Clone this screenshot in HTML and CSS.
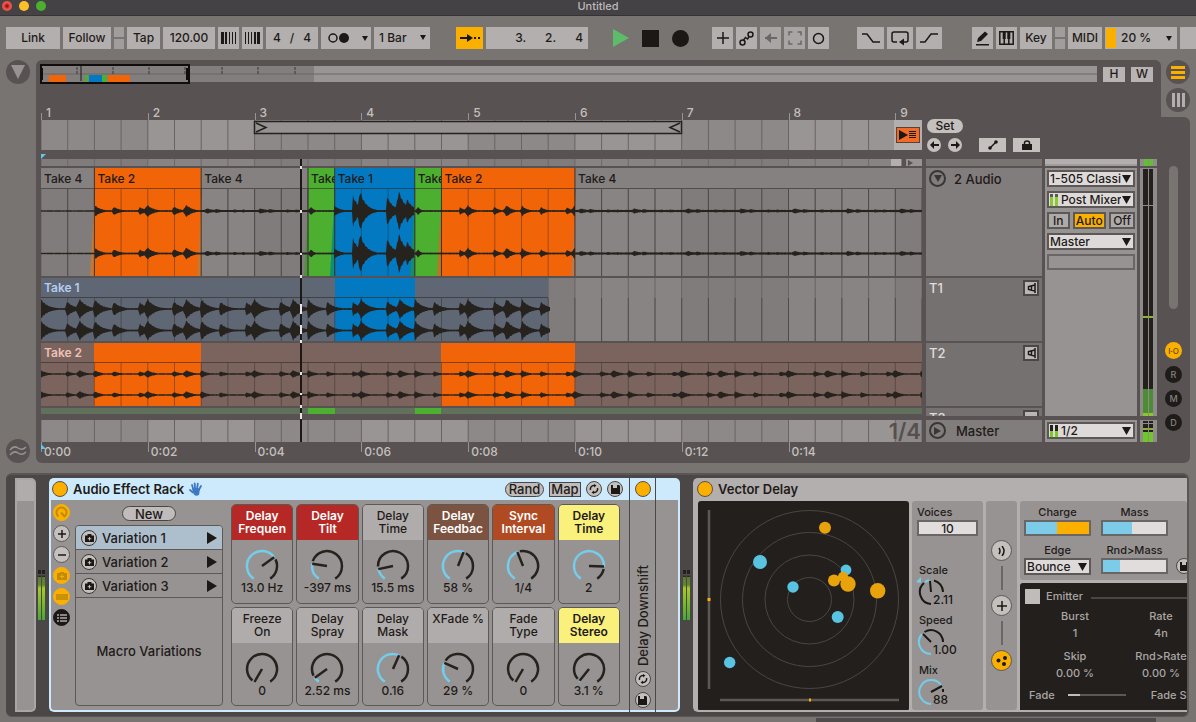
FILE: index.html
```html
<!DOCTYPE html>
<html lang="en">
<head>
<meta charset="utf-8">
<title>Untitled</title>
<link rel="stylesheet" href="styles.css">
</head>
<body>
<header class="titlebar">
  <div class="lights"><i class="red-light"></i><i class="yellow-light"></i><i class="green-light"></i></div>
  <h1>Untitled</h1>
</header>

<nav class="toolbar" aria-label="Control bar">
  <div class="group">
    <button class="tb w54">Link</button>
    <button class="tb w48">Follow</button>
    <button class="tb split" aria-label="Nudge"></button>
    <button class="tb w33">Tap</button>
    <button class="tb w52">120.00</button>
    <button class="tb w21" aria-label="Nudge down"><svg width="15" height="12"><path d="M0 0h3v12H0zM4 0h2v12H4zM8 0h1v12H8zM11 0h1v12h-1zM14 0h1v12h-1z"/></svg></button>
    <button class="tb w21" aria-label="Nudge up"><svg width="15" height="12"><path d="M0 0h1v12H0zM3 0h1v12H3zM6 0h1v12H6zM9 0h2v12H9zM12 0h3v12h-3z"/></svg></button>
    <button class="tb w52 sig"><span>4</span><span>/</span><span>4</span></button>
    <button class="tb w50 drop" aria-label="Metronome"><svg width="22" height="10"><circle cx="5" cy="5" r="4" fill="none" stroke="#1b1815" stroke-width="1.5"/><circle cx="16" cy="5" r="5"/></svg><svg width="6" height="5"><path d="M0 0h6L3 5z"/></svg></button>
    <span class="tbselect w56"><select aria-label="Quantization"><option>1 Bar</option></select><svg width="6" height="5"><path d="M0 0h6L3 5z"/></svg></span>
  </div>
  <div class="group g26">
    <button class="tb w27 on" aria-label="Follow playback"><svg width="20" height="10"><path d="M0 4h7V1l6 4-6 4V6H0zM14 4h2v2h-2zM18 4h2v2h-2z"/></svg></button>
    <output class="tb position"><span>3.</span><span>2.</span><span>4</span></output>
  </div>
  <div class="group transport">
    <button aria-label="Play"><svg width="16" height="18"><path d="M0 0l16 9L0 18z" fill="#5dbb6a"/></svg></button>
    <button aria-label="Stop"><svg width="17" height="17"><path d="M0 0h17v17H0z"/></svg></button>
    <button aria-label="Record"><svg width="17" height="17"><circle cx="8.500" cy="8.500" r="8.500"/></svg></button>
  </div>
  <div class="group g23">
    <button class="tb w21" aria-label="Overdub"><svg class="line" width="14" height="14"><path d="M7 1v12M1 7h12"/></svg></button>
    <button class="tb w21" aria-label="Automation arm"><svg class="line" width="15" height="15"><circle cx="3.500" cy="11.500" r="2.500"/><circle cx="11.500" cy="3.500" r="2.500"/><path d="M4.500 9l2-2.500 2 1.500L10 6"/></svg></button>
    <button class="tb w21 dim" aria-label="Re-enable automation"><svg width="12" height="10"><path d="M0 4h6V1l0-1v10l0-4H0z" fill="#6b6766"/><path d="M0 5l6-5v4h6v2H6v4z" fill="#6b6766"/></svg></button>
    <button class="tb w21 dim" aria-label="Capture"><svg class="line" width="14" height="14"><path stroke="#6b6766" d="M1 4.500V1h3.500M9.500 1H13v3.500M13 9.500V13H9.500M4.500 13H1V9.500" /></svg></button>
    <button class="tb w21" aria-label="Session record"><svg class="line" width="13" height="13"><circle cx="6.500" cy="6.500" r="5"/></svg></button>
  </div>
  <div class="group g28">
    <button class="tb w27" aria-label="Punch in"><svg class="line" width="18" height="12"><path d="M0 2h5l6 8h7"/></svg></button>
    <button class="tb w26" aria-label="Loop"><svg class="line" width="18" height="15"><path d="M6 11H3Q1 11 1 9V3q0-2 2-2h12q2 0 2 2v6q0 2-2 2h-4"/><path d="M13 7.500v7L8 11z" fill="#1b1815" stroke="none"/></svg></button>
    <button class="tb w26" aria-label="Punch out"><svg class="line" width="18" height="12"><path d="M0 10h5l6-8h7"/></svg></button>
  </div>
  <div class="group last">
    <button class="tb w21" aria-label="Draw mode"><svg width="15" height="15"><path d="M1 13h13v1.500H1zM2 11l1-4 7-6.500L13 3 6 10z"/></svg></button>
    <button class="tb w21" aria-label="Computer keyboard"><svg class="line" width="15" height="14"><path d="M.8.800h13.400v12.400H.8zM5.200 7v6M9.800 7v6"/><path stroke-width="3" d="M5.200 1v7M9.800 1v7"/></svg></button>
    <button class="tb w32">Key</button>
    <button class="tb split" aria-label="Key activity"></button>
    <button class="tb w34">MIDI</button>
    <button class="tb cpu"><i></i><span>20 %</span><svg width="6" height="5"><path d="M0 0h6L3 5z"/></svg></button>
    <button class="tb w16" aria-label="Disk overload"></button>
  </div>
</nav>

<main class="arrangement">
  <aside class="gutter">
    <button class="round24" aria-label="Show browser"><svg width="14" height="14"><path d="M0 0h14L7 14z" fill="#979392"/></svg></button>
    <button class="round24" aria-label="Groove pool"><svg class="line" width="18" height="12"><path stroke="#979392" d="M1 5q4-5 8-2t8-1M1 10q4-5 8-2t8-1"/></svg></button>
  </aside>

  <section class="panel">
    <div class="overview-row">
      <svg class="overview" viewBox="0 0 1057 20" preserveAspectRatio="none">
        <rect y="2" width="1057" height="16" fill="#999594"/>
        <rect y="2" width="274" height="16" fill="#827e7d"/>
        <path d="M0 10h1057" stroke="#6a6665"/>
        <path d="M37 3v8M73 3v8M109 3v8M145 3v8M182 3v8M218 3v8M255 3v8" stroke="#3a3634" stroke-dasharray="3 1"/>
        <rect x="9" y="11" width="17" height="7" fill="#f26408"/><rect x="45" y="11" width="3" height="7" fill="#4caf30"/><rect x="49" y="11" width="13" height="7" fill="#0379c2"/><rect x="62" y="11" width="5" height="7" fill="#4caf30"/><rect x="68" y="11" width="22" height="7" fill="#f26408"/>
        <path d="M41 2v15" stroke="#1b1815"/>
        <rect x="1" y="1" width="148" height="18" fill="none" stroke="#100e0c" stroke-width="2"/>
        <path d="M2 4v12M147 4v12" stroke="#100e0c" stroke-width="2"/>
      </svg>
      <button class="hw">H</button><button class="hw">W</button>
    </div>

    <div class="body">
      <div class="timeline">
        <div class="ruler"><span>1</span><span>2</span><span>3</span><span>4</span><span>5</span><span>6</span><span>7</span><span>8</span><span>9</span></div>
        <div class="scrub">
          <svg class="grid" data-grid="scrub"></svg>
          <svg class="grid" viewBox="0 0 881 30" preserveAspectRatio="none"><path d="M213.500 1.500h427v12h-427z" fill="#969291" stroke="#24201e" stroke-width="1.500"/><path d="M215 3l10 4.500L215 12M639 3l-10 4.500L639 12" fill="none" stroke="#24201e" stroke-width="1.500"/></svg>
          <div class="back"><button aria-label="Back to arrangement"><svg width="18" height="10"><path d="M0 0l9 5-9 5zM10 1h7v1h-7zM10 3h7v1h-7zM10 5h7v1h-7zM10 7h7v1h-7z"/></svg></button></div>
        </div>
        <div class="marker"><svg width="6" height="6"><path d="M0 0h5L0 5z" fill="#5fc8e8"/></svg></div>
        <div class="tracks">
          <div class="strip"><svg class="grid" data-grid="lane"></svg><i></i><b></b></div>
          <div class="lane main">
            <svg class="grid" data-grid="lane"></svg>
            <div class="clips">
              <div class="clip b2"><span>Take 4</span></div><div class="clip b4 orange"><span>Take 2</span></div><div class="clip b4"><span>Take 4</span></div><div class="clip b1 green"><span>Take 4</span></div><div class="clip b3 blue"><span>Take 1</span></div><div class="clip b1 green"><span>Take 4</span></div><div class="clip b5 orange"><span>Take 2</span></div><div class="clip b13"><span>Take 4</span></div>
            </div>
            <svg class="grid" data-wave="main" data-height="108"></svg>
          </div>
          <div class="lane take">
            <svg class="grid" data-grid="lane"></svg>
            <div class="clips take1">
              <div class="clip b11"><span>Take 1</span></div><div class="clip b3 blue"><span></span></div><div class="clip b5"><span></span></div><div class="empty b14"></div>
            </div>
            <svg class="grid" data-wave="take1" data-height="63"></svg>
          </div>
          <div class="lane take">
            <div class="clips take2">
              <div class="clip b2"><span>Take 2</span></div><div class="clip b4 orange"><span></span></div><div class="clip b9"><span></span></div><div class="clip b5 orange"><span></span></div><div class="clip b13"><span></span></div>
            </div>
            <svg class="grid" data-wave="take2" data-height="63"></svg>
          </div>
          <div class="lane cut">
            <div class="clips take3">
              <div class="clip b10"><span>Take 3</span></div><div class="clip b1 green"></div><div class="clip b3"></div><div class="clip b1 green"></div><div class="clip b18"></div>
            </div>
          </div>
          <div class="scrub low"><svg class="grid" data-grid="scrub"></svg><span>1/4</span></div>
          <svg class="playhead" width="2" height="283"><path d="M1 0v283" stroke="#1b1815" stroke-width="2"/><path d="M1 7v3M1 51v3M1 94v2M1 116v3M1 145v10M1 166v9M1 181v3M1 213v3M1 234v2M1 246v3M1 254v6" stroke="#e8e4e2" stroke-width="2"/></svg>
        </div>
        <div class="times"><svg width="6" height="6"><path d="M0 0l5 5H0z" fill="#5fc8e8"/></svg><span>0:00</span><span>0:02</span><span>0:04</span><span>0:06</span><span>0:08</span><span>0:10</span><span>0:12</span><span>0:14</span></div>
      </div>

      <div class="mixer">
        <div class="locators">
          <div class="setbox"><button class="set">Set</button>
            <div><button class="loc" aria-label="Previous locator"><svg width="9" height="8"><path d="M0 4l4-4v3h5v2H4v3z"/></svg></button><button class="loc" aria-label="Next locator"><svg width="9" height="8"><path d="M9 4L5 0v3H0v2h5v3z"/></svg></button></div></div>
          <button class="mini" aria-label="Automation mode"><svg width="10" height="10"><path d="M2 8l6-6" stroke="#1b1815" stroke-width="1.500"/><circle cx="2" cy="8" r="1.800"/><circle cx="8" cy="2" r="1.800"/></svg></button>
          <button class="mini" aria-label="Lock envelopes"><svg width="10" height="10"><path d="M0 4h10v6H0z"/><path d="M2.500 5V3q0-2 2.500-2t2.500 2v2" fill="none" stroke="#1b1815" stroke-width="1.500"/></svg></button>
        </div>
        <div class="cols stub"><i></i><i class="lt"></i><i class="gm"></i></div>
        <div class="cols heads">
          <div class="names">
            <div class="head audio"><button class="fold" aria-label="Fold"><svg width="8" height="7"><path d="M0 0h8L4 7z" fill="#3a3634"/></svg></button><span>2 Audio</span></div>
            <div class="head take"><span>T1</span><button class="spk" aria-label="Audition take 1"><svg class="line" width="9" height="10"><path d="M8 0v10M8 2L1.500 3.500v3L8 8M4.500 3v4"/></svg></button></div>
            <div class="head take"><span>T2</span><button class="spk" aria-label="Audition take 2"><svg class="line" width="9" height="10"><path d="M8 0v10M8 2L1.500 3.500v3L8 8M4.500 3v4"/></svg></button></div>
            <div class="head take cut"><span>T3</span><button class="spk" aria-label="Audition take 3"></button></div>
          </div>
          <div class="io">
            <span class="sel"><select aria-label="Audio from"><option>1-505 Classic</option></select><svg width="9" height="8"><path d="M0 0h9L4.500 8z"/></svg></span>
            <span class="sel pad"><svg class="lv" width="8" height="12"><path d="M0 0h3v12H0zM5 0h3v12H5z" fill="#8cc832"/><path d="M0 0h3v3H0zM5 0h3v3H5z" fill="#5c5856"/></svg><select aria-label="Input channel"><option>Post Mixer</option></select><svg width="9" height="8"><path d="M0 0h9L4.500 8z"/></svg></span>
            <div class="mon"><button>In</button><button class="on">Auto</button><button>Off</button></div>
            <span class="sel"><select aria-label="Audio to"><option>Master</option></select><svg width="9" height="8"><path d="M0 0h9L4.500 8z"/></svg></span>
            <div class="blank"></div>
          </div>
          <div class="vu"><i></i><i></i></div>
        </div>
        <div class="cols master">
          <div class="head"><button class="fold" aria-label="Unfold"><svg width="7" height="8"><path d="M0 0l7 4-7 4z" fill="#3a3634"/></svg></button><span>Master</span></div>
          <div class="io"><span class="sel pad"><svg class="lv" width="8" height="12"><path d="M0 0h3v12H0zM5 0h3v12H5z" fill="#7cc828"/><path d="M0 0h3v6H0zM5 0h3v6H5z" fill="#24201e"/></svg><select aria-label="Master output"><option>1/2</option></select><svg width="9" height="8"><path d="M0 0h9L4.500 8z"/></svg></span></div>
          <div class="vu"><i></i><i></i></div>
        </div>
      </div>
    </div>
  </section>

  <aside class="side">
    <div class="views">
      <button class="round24" aria-label="Arrangement view"><svg width="14" height="13"><path d="M0 0h14v3H0zM0 5h14v3H0zM0 10h14v3H0z" fill="#fbb000"/></svg></button>
      <button class="round24" aria-label="Session view"><svg width="13" height="14"><path d="M0 0h3v14H0zM5 0h3v14H5zM10 0h3v14h-3z" fill="#b3afae"/></svg></button>
    </div>
    <div class="side-lower">
      <i class="scroll"></i>
      <div class="toggles"><button class="on">I·O</button><button>R</button><button>M</button><button>D</button></div>
    </div>
  </aside>
</main>

<section class="devices" aria-label="Devices">
  <div class="tail"></div>
  <div class="meter"></div>

  <article class="rack">
    <header><button class="power" aria-label="Device on"></button><h2>Audio Effect Rack</h2>
      <svg class="hand line" width="13" height="14"><path d="M4.500 8L3 3M6 7L5.700 1.500M8 7l.8-5.300M9.500 8.500L12 4M4 10.500L1 8" stroke="#3b78c4" stroke-width="1.800" stroke-linecap="round"/><path d="M4 7h6l-.5 5q-2 2-4 0z" fill="#3b78c4" stroke="#3b78c4"/></svg>
      <span class="grow"></span>
      <button class="pill">Rand</button><button class="map">Map</button>
      <button class="rnd" aria-label="Hot swap"><svg class="line" width="10" height="10"><path d="M1.500 6A3.500 3.500 0 0 1 5 1.500M8.500 4A3.500 3.500 0 0 1 5 8.500"/><path d="M5 0l2.500 1.500L5 3.500zM5 10L2.500 8.500 5 6.500z" fill="#1b1815" stroke="none"/></svg></button>
      <button class="rnd" aria-label="Save preset"><svg width="9" height="9"><path d="M0 0h8l1 1v8H0z"/><path d="M2 0h4v3H2z" fill="#c4c0be"/></svg></button>
    </header>
    <div class="rack-body">
      <div class="icons">
        <button class="ico on" aria-label="Macro controls"><svg class="line" width="13" height="13"><path d="M3.500 10.500A5 5 0 1 1 9.500 10.500L6 6.500" stroke="#c08a0c" stroke-width="2"/></svg></button>
        <button class="ico" aria-label="Add macro"><svg class="line" width="8" height="8"><path d="M4 0v8M0 4h8"/></svg></button>
        <button class="ico" aria-label="Remove macro"><svg class="line" width="8" height="8"><path d="M0 4h8"/></svg></button>
        <button class="ico on" aria-label="Variations"><svg width="10" height="8"><path d="M0 1h3V0h4v1h3v7H0z" fill="#c08a0c"/><path d="M5 2.500v4M3 4.500h4" stroke="#fbb000"/></svg></button>
        <button class="ico on" aria-label="Devices"><svg width="12" height="6"><path d="M0 0h12v6H0z" fill="#c9920c"/></svg></button>
        <button class="ico black" aria-label="Chain list"><svg width="10" height="8"><path d="M0 0h2v2H0zM3 0h7v2H3zM0 3h2v2H0zM3 3h7v2H3zM0 6h2v2H0zM3 6h7v2H3z" fill="#8a8685"/></svg></button>
      </div>
      <div class="variations">
        <button class="new">New</button>
        <div class="list">
          <button class="row sel1"><i><svg width="9" height="8"><path d="M0 1.500h2.500V0h4v1.500H9V8H0z"/><path d="M4.500 3v3.500M2.800 4.700h3.500" stroke="#c4c0be"/></svg></i><span>Variation 1</span><svg width="10" height="12"><path d="M0 0l10 6-10 6z"/></svg></button>
          <button class="row"><i><svg width="9" height="8"><path d="M0 1.500h2.500V0h4v1.500H9V8H0z"/><path d="M4.500 3v3.500M2.800 4.700h3.500" stroke="#c4c0be"/></svg></i><span>Variation 2</span><svg width="10" height="12"><path d="M0 0l10 6-10 6z"/></svg></button>
          <button class="row"><i><svg width="9" height="8"><path d="M0 1.500h2.500V0h4v1.500H9V8H0z"/><path d="M4.500 3v3.500M2.800 4.700h3.500" stroke="#c4c0be"/></svg></i><span>Variation 3</span><svg width="10" height="12"><path d="M0 0l10 6-10 6z"/></svg></button>
          <p>Macro Variations</p>
        </div>
      </div>
      <div class="macros">
        <div class="macro red"><h3>Delay<br>Frequen</h3><svg class="knob" data-angle="54"></svg><span>13.0 Hz</span></div>
        <div class="macro red"><h3>Delay<br>Tilt</h3><svg class="knob" data-angle="-81"></svg><span>-397 ms</span></div>
        <div class="macro"><h3>Delay<br>Time</h3><svg class="knob" data-angle="-102"></svg><span>15.5 ms</span></div>
        <div class="macro brown"><h3>Delay<br>Feedbac</h3><svg class="knob" data-angle="22"></svg><span>58 %</span></div>
        <div class="macro rust"><h3>Sync<br>Interval</h3><svg class="knob" data-angle="-22"></svg><span>1/4</span></div>
        <div class="macro yellow"><h3>Delay<br>Time</h3><svg class="knob" data-angle="92"></svg><span>2</span></div>
        <div class="macro"><h3>Freeze<br>On</h3><svg class="knob" data-angle="-150"></svg><span>0</span></div>
        <div class="macro"><h3>Delay<br>Spray</h3><svg class="knob" data-angle="-126"></svg><span>2.52 ms</span></div>
        <div class="macro"><h3>Delay<br>Mask</h3><svg class="knob" data-angle="24"></svg><span>0.16</span></div>
        <div class="macro"><h3>XFade %</h3><svg class="knob" data-angle="-66"></svg><span>29 %</span></div>
        <div class="macro"><h3>Fade<br>Type</h3><svg class="knob" data-angle="-150"></svg><span>0</span></div>
        <div class="macro yellow"><h3>Delay<br>Stereo</h3><svg class="knob" data-angle="-141"></svg><span>3.1 %</span></div>
      </div>
    </div>
  </article>
  <article class="chain">
    <div class="chain-head"><button class="power" aria-label="Chain on"></button></div>
    <h2>Delay Downshift</h2>
    <button class="rnd" aria-label="Hot swap"><svg class="line" width="10" height="10"><path d="M1.500 6A3.500 3.500 0 0 1 5 1.500M8.500 4A3.500 3.500 0 0 1 5 8.500"/><path d="M5 0l2.500 1.500L5 3.500zM5 10L2.500 8.500 5 6.500z" fill="#1b1815" stroke="none"/></svg></button>
    <button class="rnd" aria-label="Save preset"><svg width="9" height="9"><path d="M0 0h8l1 1v8H0z"/><path d="M2 0h4v3H2z" fill="#c4c0be"/></svg></button>
  </article>
  <div class="rack-end"></div>
  <div class="meter"></div>

  <article class="vector">
    <header><button class="power" aria-label="Device on"></button><h2>Vector Delay</h2></header>
    <div class="vector-body">
      <svg class="scope" viewBox="0 0 211 210" width="211" height="210">
        <g fill="none" stroke="#4a4644"><circle cx="111.500" cy="98.500" r="22"/><circle cx="111.500" cy="98.500" r="44.500"/><circle cx="111.500" cy="98.500" r="67"/><circle cx="111.500" cy="98.500" r="89"/><path stroke="#5c5856" stroke-width="2.500" d="M11 9v179M22 199h179"/></g>
        <path fill="#fbb000" d="M9.500 97h3v3h-3zM111 197.500h2v3h-2z"/>
        <g fill="#58c4e2"><circle cx="62" cy="61" r="7"/><circle cx="95" cy="86" r="5.700"/><circle cx="148" cy="69" r="5.400"/><circle cx="139.700" cy="116" r="6"/><circle cx="31.700" cy="161.500" r="5.700"/></g>
        <g fill="#e8a20c"><circle cx="127" cy="26.700" r="6"/><circle cx="136" cy="79.500" r="6"/><circle cx="145" cy="75.700" r="5"/><circle cx="150" cy="83" r="7.700"/><circle cx="179.700" cy="89.700" r="7.700"/></g>
      </svg>
      <div class="params">
        <label for="voices">Voices</label><input id="voices" type="text" value="10">
        <div class="dial first"><span>Scale</span><svg width="50" height="30"><path d="M15 27A12 12 0 0 1 8 6M18 3.500A12 12 0 0 1 27 15" /><path d="M15 15L14 4"/><path stroke="#74cdea" d="M9 5l4-2"/><path d="M0 5l5-5v6z" fill="#74cdea" stroke="none"/><text x="17" y="27">2.11</text></svg></div>
        <div class="dial"><span>Speed</span><svg width="50" height="30"><path stroke="#74cdea" d="M15 27A12 12 0 0 1 6 7"/><path d="M8.500 5A12 12 0 0 1 27 15M15 15L7 7"/><text x="17" y="27">1.00</text></svg></div>
        <div class="dial"><span>Mix</span><svg width="50" height="30"><path stroke="#74cdea" d="M15 27A12 12 0 1 1 25 8"/><path d="M15 15l11-6M27 12v3"/><text x="17" y="27">88</text></svg></div>
      </div>
      <div class="modes">
        <button class="big" aria-label="Delay"><svg class="line" width="8" height="10"><path d="M1 2q2 3 0 6M4 0q4 5 0 10"/></svg></button><i></i>
        <button class="big" aria-label="Add"><svg class="line" width="10" height="10"><path d="M5 0v10M0 5h10"/></svg></button><i></i>
        <button class="big on" aria-label="Particles"><svg width="12" height="12"><circle cx="2.500" cy="5.500" r="2"/><circle cx="9" cy="3" r="2"/><circle cx="8" cy="9" r="2"/></svg></button>
      </div>
      <div class="right">
        <div class="top">
          <div class="f"><label for="charge">Charge</label><input class="bar charge" id="charge" type="range" value="50"></div>
          <div class="f"><label for="mass">Mass</label><input class="bar mass" id="mass" type="range" value="46"></div>
          <div class="f"><label for="edge">Edge</label><span class="sel"><select id="edge"><option>Bounce</option></select><svg width="9" height="8"><path d="M0 0h9L4.500 8z"/></svg></span></div>
          <div class="f"><label for="rnd">Rnd&gt;Mass</label><input class="bar rndm" id="rnd" type="range" value="27"></div>
          <button class="rnd save" aria-label="Save"><svg width="9" height="9"><path d="M0 0h8l1 1v8H0z"/><path d="M2 0h4v3H2z" fill="#c4c0be"/></svg></button>
        </div>
        <div class="emitter">
          <div class="em-head"><input type="checkbox" id="emitter"><label for="emitter">Emitter</label><i></i></div>
          <dl><div><dt>Burst</dt><dd>1</dd></div><div><dt>Rate</dt><dd>4n</dd></div><div><dt>Skip</dt><dd>0.00 %</dd></div><div><dt>Rnd&gt;Rate</dt><dd>0.00 %</dd></div></dl>
          <div class="fade"><label for="fade">Fade</label><input id="fade" type="range" value="20"><span>Fade Shape</span></div>
        </div>
      </div>
    </div>
  </article>
</section>
<footer class="foot"><i></i></footer>
<script src="app.js"></script>
</body>
</html>
```
FILE: styles.css
```css
* { box-sizing: border-box; }
body { margin: 0; min-height: 100vh; background: #787472; color: #1f1b19; font: 500 12px/14px Inter, "Liberation Sans", sans-serif; display: flex; flex-direction: column; overflow-x: hidden; }
button, select, input { font: inherit; color: inherit; margin: 0; padding: 0; border: 0; border-radius: 0; background: none; }
button { display: flex; align-items: center; justify-content: center; white-space: nowrap; }
select { appearance: none; outline: 0; }
h1, h2, h3, p, dl, dt, dd { margin: 0; font: inherit; }
svg { display: block; flex: none; fill: #1b1815; }
svg.line { fill: none; stroke: #1b1815; stroke-width: 1.5; }

.titlebar { height: 16px; background: #454245; border-bottom: 1px solid #373335; display: grid; grid-template-columns: 1fr auto 1fr; }
.titlebar h1 { font-size: 11px; line-height: 13px; font-weight: 500; color: #bdb9ba; }
.lights { display: flex; gap: 7px; padding: 1px 2px; }
.lights i { width: 10px; height: 10px; border-radius: 50%; }
.red-light { background: radial-gradient(#901818 1px, #ee5048 3px); }
.yellow-light { background: #fcbf2c; }
.green-light { background: #4caf30; }

.toolbar { display: flex; align-items: center; height: 44px; padding-left: 6px; }
.group { display: flex; gap: 3px; align-items: center; flex: none; }
.g28 { margin-left: 28px; } .g26 { margin-left: 26px; } .g23 { margin-left: 23px; }
.last { margin-left: auto; }
.tb { height: 22px; background: #b3afae; font-size: 12px; flex: none; }
.tb.on { background: #fbb000; }
.tb.dim { background: #a9a5a4; }
.w16 { width: 16px; } .w21 { width: 21px; } .w26 { width: 26px; } .w27 { width: 27px; } .w32 { width: 32px; } .w33 { width: 33px; } .w34 { width: 34px; } .w48 { width: 48px; } .w50 { width: 50px; } .w52 { width: 52px; } .w54 { width: 54px; } .w56 { width: 56px; }
.split { width: 10px; background: linear-gradient(#a19d9c 10px, #787472 10px, #787472 12px, #a19d9c 12px); }
.sig { gap: 9px; }
.drop { gap: 12px; padding-left: 4px; }
.tbselect { position: relative; height: 22px; background: #b3afae; }
.tbselect select { width: 100%; height: 100%; padding-left: 5px; }
.tbselect svg { position: absolute; right: 4px; top: 8px; }
.position { width: 102px; display: flex; align-items: center; justify-content: flex-end; gap: 19px; padding-right: 5px; }
.transport { gap: 13px; margin-left: 25px; }
.cpu { width: 72px; justify-content: flex-start; padding-right: 5px; }
.cpu i { width: 10px; height: 20px; background: #fbb000; margin: 0 5px 0 1px; }
.cpu svg { margin-left: auto; }

.arrangement { display: flex; min-height: 403px; }
.gutter { width: 36px; display: flex; flex-direction: column; justify-content: space-between; align-items: center; }
.round24 { width: 24px; height: 24px; border-radius: 50%; background: #585352; }
.panel { flex: 1; min-width: 0; background: #585352; border-radius: 6px 6px 0 6px; padding: 4px 4px 0 5px; }
.overview-row { display: flex; align-items: center; height: 20px; gap: 6px; padding-right: 4px; margin-left: -1px; }
.overview { flex: 1; height: 20px; min-width: 0; }
.hw { width: 22px; height: 15px; background: #b8b4b3; font-size: 12px; }
.body { display: flex; gap: 4px; }
.timeline { flex: 1; min-width: 0; }
.ruler, .times { display: grid; grid-template-columns: repeat(8, 4fr) 1fr; color: #c4c0be; }
.ruler { height: 36px; align-items: end; }
.ruler span { height: 14px; padding-left: 5px; background: linear-gradient(#979392, #979392) 0 7px / 1px 8px no-repeat; }
.grid { position: absolute; inset: 0; width: 100%; height: 100%; }
.scrub { position: relative; height: 30px; }
.back { position: absolute; right: 0; top: 0; width: 28px; height: 30px; background: #b3afae; display: flex; align-items: center; justify-content: center; }
.back button { width: 24px; height: 16px; background: #f06a28; border: 1px solid #5c4030; }
.marker { height: 9px; padding-top: 4px; }
.tracks { position: relative; display: flex; flex-direction: column; gap: 2px; }
.strip { position: relative; height: 7px; }
.strip i { position: absolute; right: 21px; top: 0; width: 10px; height: 7px; background: #b3afae; }
.strip b { position: absolute; right: 0; top: 0; width: 20px; height: 7px; background: linear-gradient(90deg, #585352 4px, #979392 4px); }
.strip b::after { content: ""; position: absolute; left: 6px; top: 1px; border: 3px solid transparent; border-left: 5px solid #585352; border-right: 0; }
.lane { position: relative; overflow: hidden; }
.lane.main { height: 108px; }
.lane.take { height: 63px; }
.lane.cut { height: 6px; }
.clips { position: relative; display: flex; height: 100%; }
.b1 { flex: 1 1 0; } .b2 { flex: 2 1 0; } .b3 { flex: 3 1 0; } .b4 { flex: 4 1 0; } .b5 { flex: 5 1 0; } .b9 { flex: 9 1 0; } .b10 { flex: 10 1 0; } .b11 { flex: 11 1 0; } .b13 { flex: 13 1 0; } .b14 { flex: 14 1 0; } .b18 { flex: 18 1 0; }
.clip { min-width: 0; overflow: hidden; }
.clip span { display: block; height: 21px; line-height: 21px; padding-left: 3px; border-bottom: 1px solid rgba(40, 34, 32, .55); white-space: nowrap; overflow: hidden; }
.take .clip span { height: 20px; line-height: 20px; font-weight: 600; }
.clip.orange, .take2 .clip.orange { background: #f26408; } .clip.blue { background: #0379c2; } .clip.green { background: #4caf30; }
.main .clip:not(.orange):not(.blue):not(.green) span { background: #858180; }
.take1 { color: #b4ccf2; } .take1 .clip:not(.blue) { background: #606774; }
.take2 { color: #efc0b6; } .take2 .clip:not(.orange) { background: #7c645e; }
.take3 { color: #b8d0a8; } .take3 .clip:not(.green) { background: #60705a; }
.scrub.low { height: 22px; margin-top: 4px; text-align: right; }
.scrub.low span { position: relative; font-size: 22px; font-weight: 600; line-height: 22px; color: #55504f; padding-right: 1px; }
.playhead { position: absolute; left: 29.4%; top: 0; }
.times { position: relative; height: 21px; grid-template-columns: repeat(8, 4fr) 1fr; }
.times > svg { position: absolute; left: 0; top: 2px; }
.times span { padding-left: 3px; line-height: 19px; background: linear-gradient(#979392, #979392) 0 0 / 1px 10px no-repeat; }

.mixer { width: 231px; }
.locators { height: 75px; display: flex; align-items: flex-end; gap: 7px; padding: 0 0 7px 1px; }
.setbox { width: 45px; }
.setbox div { display: flex; gap: 7px; margin-top: 5px; }
.set { width: 36px; height: 14px; border-radius: 7px; background: #c4c0be; }
.loc { width: 14px; height: 14px; border-radius: 50%; background: #c4c0be; }
.mini { width: 27px; height: 14px; background: #c4c0be; }
.cols { display: grid; grid-template-columns: 116px 92px 17px; gap: 3px; }
.stub { height: 7px; margin-bottom: 2px; }
.stub i { background: #787472; } .stub .lt { background: #b3afae; border-bottom: 2px solid #a09c9b; } .stub .gm { background: linear-gradient(90deg, #8f8b8a 4px, #60c030 4px, #60c030 8px, #8f8b8a 8px, #8f8b8a 9px, #60c030 9px, #60c030 13px, #8f8b8a 13px); }
.heads { height: 248px; overflow: hidden; }
.names { display: flex; flex-direction: column; gap: 2px; }
.head { display: flex; align-items: flex-start; background: #817d7c; padding: 2px 3px 0 3px; }
.head span { line-height: 18px; font-size: 13px; }
.audio { height: 108px; gap: 8px; }
.head.take { height: 63px; background: #757170; color: #e0dcdb; justify-content: space-between; padding-top: 1px; }
.head.cut { height: 8px; overflow: hidden; }
.fold { width: 17px; height: 17px; border: 2px solid #3a3634; border-radius: 50%; flex: none; }
.spk { width: 16px; height: 16px; background: #bab6b5; border: 2px solid #4a4644; margin-top: 1px; }
.io { background: #979392; padding: 2px; display: flex; flex-direction: column; gap: 4px; }
.sel { position: relative; display: block; height: 17px; background: #dddad9; border: 2px solid #5c5856; }
.sel select { display: block; width: 100%; height: 13px; line-height: 13px; padding: 0 12px 0 1px; overflow: hidden; }
.sel.pad select { padding-left: 12px; }
.sel > svg { position: absolute; right: 2px; top: 3px; }
.sel > svg.lv { left: 1px; right: auto; top: 1px; }
.mon { display: flex; justify-content: space-between; }
.mon button { height: 17px; padding: 0 4px; border: 2px solid #5c5856; background: #aeaaa9; }
.mon .on { background: #fbb000; padding: 0 1px; }
.mon button:last-child { padding: 0 2px; }
.blank { height: 16px; border: 2px solid #6a6665; }
.vu { background: #8f8b8a; display: flex; gap: 1px; padding: 1px 4px 0 3px; }
.vu i { flex: 1; background: linear-gradient(#24201e 36px, #8f8b8a 36px, #8f8b8a 37px, #24201e 37px, #24201e 147px, #8cb832 147px, #8cb832 149px, #24201e 149px, #24201e 220px, #4c8c34 220px, #4c8c34 244px, #8cc828 244px); }
.master { height: 22px; margin-top: 4px; }
.master .head { gap: 10px; background: #817d7c; }
.master .vu i { background: linear-gradient(#24201e 2px, #8f8b8a 2px, #8f8b8a 3px, #24201e 3px, #24201e 7px, #8ab030 7px, #8ab030 9px, #24201e 9px, #24201e 11px, #70c828 11px); }

.side { width: 35px; padding-right: 6px; display: flex; flex-direction: column; }
.views { height: 57px; display: flex; flex-direction: column; align-items: flex-end; gap: 4px; padding-bottom: 4px; }
.side-lower { flex: 1; background: #585352; border-radius: 0 6px 6px 0; padding: 49px 8px 32px 4px; display: flex; flex-direction: column; justify-content: space-between; align-items: center; }
.scroll { width: 9px; height: 143px; border-radius: 5px; background: #787472; }
.toggles { display: flex; flex-direction: column; gap: 7px; }
.toggles button { width: 17px; height: 17px; border-radius: 50%; background: #1f1b19; color: #85817f; font-size: 9px; }
.toggles .on { background: #fbb000; color: #6a4a08; font-size: 8px; }

.devices { margin: 10px 7px 0 6px; height: 244px; background: #4b4746; border: solid #5a5655; border-width: 2px 2px 1px 0; border-radius: 6px; padding: 3px 0 4px 9px; display: flex; overflow: hidden; }
.tail { width: 21px; flex: none; border-radius: 0 5px 5px 0; background: linear-gradient(#b0acab 21px, #979392 21px); border: 2px solid #aaa6a5; }
.meter { width: 7px; height: 50px; flex: none; margin: 92px 3px 0 2px; background: linear-gradient(90deg, transparent 3px, #4b4746 3px, #4b4746 4px, transparent 4px), linear-gradient(#24201e 4px, #5c5856 4px, #24201e 7px, #5f7a30 7px, #5f8a30 15px, #a8c828 18px, #48a838 50px); }
.rack-end + .meter { margin: 92px 3px 0; }
.power { width: 16px; height: 16px; border-radius: 50%; background: #fbb000; border: 1px solid #5c5048; flex: none; }
.rack { margin-left: 1px; width: 580px; flex: none; border: 2px solid #cdeafc; border-right: 0; border-radius: 5px 0 0 5px; background: #979392; display: flex; flex-direction: column; }
.rack header { height: 20px; background: #cdeafc; display: flex; align-items: center; gap: 5px; padding: 0 6px 2px 1px; }
h2 { font-weight: 600; font-size: 13px; white-space: nowrap; }
.grow { flex: 1; }
.pill, .map, .new { height: 15px; border: 1px solid #4a4644; background: #c0bcbb; font-size: 13px; }
.pill { width: 39px; border-radius: 8px; } .map { width: 32px; }
.rnd { width: 16px; height: 16px; border-radius: 50%; border: 1px solid #4a4644; background: #c4c0be; flex: none; }
.rack-body { flex: 1; display: flex; padding: 4px 0 4px 2px; }
.icons { width: 22px; display: flex; flex-direction: column; gap: 4px; }
.ico { width: 17px; height: 17px; border-radius: 50%; border: 1px solid #5c5856; background: #c4c0be; }
.ico.on { background: #fbb000; border-color: #fbb000; }
.ico.black { background: #1b1815; border-color: #1b1815; }
.variations { width: 148px; display: flex; flex-direction: column; align-items: center; padding-top: 2px; }
.new { width: 54px; border-radius: 8px; }
.list { margin-top: 4px; width: 100%; flex: 1; border: 1px solid #5c5856; border-radius: 4px; display: flex; flex-direction: column; overflow: hidden; }
.row { width: 100%; height: 24px; justify-content: flex-start; gap: 5px; padding: 0 5px; border-bottom: 1px solid #5c5856; font-size: 13px; }
.row span { flex: 1; text-align: left; }
.sel1 { background: #adbfcd; }
.row i { width: 16px; height: 16px; border-radius: 50%; border: 1px solid #3a3634; background: #c4c0be; display: flex; align-items: center; justify-content: center; }
.list p { margin: auto; font-size: 13px; padding-bottom: 2px; }
.macros { flex: 1; margin: 0 9px 0 8px; display: grid; grid-template-columns: repeat(6, 1fr); gap: 3px; }
.macro { border: 1px solid #5c5856; border-radius: 5px; overflow: hidden; display: flex; flex-direction: column; align-items: center; }
.macro h3 { width: 100%; height: 35px; padding-top: 4px; text-align: center; line-height: 13px; background: #b0acab; }
.macro.red h3 { background: #b52826; } .brown h3 { background: #7c5340; } .rust h3 { background: #af4a22; } .macro.yellow h3 { background: #faf07c; }
.red h3, .brown h3, .rust h3 { color: #fff; font-weight: 600; }
.yellow h3 { font-weight: 600; }
.macro .knob { width: 38px; height: 32px; margin-top: 9px; fill: none; stroke-width: 2.5; }
.macro span { line-height: 14px; }
.chain { width: 27px; flex: none; background: #979392; border: 2px solid #4b4746; border-width: 0 1px; display: flex; flex-direction: column; align-items: center; gap: 5px; padding-bottom: 4px; box-shadow: inset 0 -2px #cdeafc; }
.chain-head { width: 100%; height: 22px; background: #cdeafc; display: flex; justify-content: center; align-items: center; }
.chain h2 { margin-top: auto; writing-mode: vertical-rl; transform: rotate(180deg); font-weight: 500; line-height: 16px; }
.rack-end { width: 24px; flex: none; border: 2px solid #cdeafc; border-left: 0; border-radius: 0 5px 5px 0; background: linear-gradient(#cdeafc 20px, #979392 20px); }
.vector { flex: 1; min-width: 0; border: 2px solid #b3afae; border-right: 0; border-radius: 5px 0 0 5px; background: #b3afae; overflow: hidden; }
.vector header { height: 21px; display: flex; align-items: center; gap: 5px; padding: 0 2px 3px 2px; }
.vector-body { display: flex; gap: 3px; padding-left: 3px; height: 209px; }
.scope { background: #231f1d; border-radius: 3px; }
.params, .modes, .top { background: #979392; border-radius: 3px; flex: none; }
.params { width: 71px; padding: 4px 5px; }
.params label { display: block; font-size: 11px; }
.params input { display: block; width: 61px; height: 16px; border: 2px solid #6a6665; background: #e0dddc; text-align: center; margin-top: 1px; }
.dial { height: 50px; padding-left: 2px; font-size: 11px; }
.dial.first { margin-top: 27px; }
.dial span { display: block; }
.dial svg { fill: none; stroke: #1b1815; stroke-width: 2; margin-left: -3px; }
.dial text { fill: #1b1815; stroke: none; font-size: 12px; }
.modes { width: 31px; display: flex; flex-direction: column; align-items: center; padding-top: 39px; gap: 5px; }
.big { width: 21px; height: 21px; border-radius: 50%; border: 1px solid #5c5856; background: #c4c0be; }
.big.on { background: #fbb000; }
.modes i { width: 2px; height: 24px; background: #6a6665; }
.right { flex: 1; min-width: 0; display: flex; flex-direction: column; gap: 3px; overflow: hidden; }
.top { position: relative; height: 79px; display: grid; grid-template-columns: 67px 67px; gap: 5px 10px; padding: 4px; overflow: hidden; }
.f label { display: block; text-align: center; font-size: 11px; }
.f { height: 33px; }
.top .sel, .bar { margin-top: 1px; }
.bar { display: block; appearance: none; width: 67px; height: 16px; border: 2px solid #6a6665; }
.bar::-webkit-slider-thumb { appearance: none; width: 1px; height: 12px; background: none; }
.charge { background: linear-gradient(90deg, #7ccbe8 50%, #fbb000 50%); }
.mass { background: linear-gradient(90deg, #7ccbe8 46%, #e0dddc 46%); }
.rndm { background: linear-gradient(90deg, #7ccbe8 27%, #e0dddc 27%); }
.save { position: absolute; right: -5px; top: 57px; }
.emitter { flex: 1; background: #231f1d; border-radius: 3px 0 0 0; color: #aaa6a4; padding: 5px 0 0 5px; overflow: hidden; font-size: 11px; }
.em-head { display: flex; align-items: center; gap: 6px; height: 16px; }
.em-head input { appearance: none; width: 15px; height: 15px; background: #c0bcba; }
.em-head i { flex: 1; height: 2px; background: #4a4644; margin: 4px 0 0 2px; }
.emitter dl { display: grid; grid-template-columns: 100px 72px; text-align: center; row-gap: 4px; margin-top: 4px; }
.emitter dl div { height: 36px; }
.emitter dt { line-height: 16px; } .emitter dd { line-height: 19px; }
.emitter dl div:nth-child(even) { white-space: nowrap; }
.fade { display: flex; align-items: center; margin: 4px 0 0 4px; white-space: nowrap; }
.fade input { appearance: none; width: 58px; height: 2px; margin: 0 25px 0 13px; background: linear-gradient(90deg, #c0bcba 20%, #5c5856 20%); }
.fade input::-webkit-slider-thumb { appearance: none; width: 1px; height: 2px; }
.foot { flex: 1; display: flex; padding: 1px 40px 0 816px; }
.foot i { flex: 1; min-height: 4px; background: #4f4b4a; }
```
FILE: app.js
```js
const NS = "http://www.w3.org/2000/svg";
const BEAT = 881 / 33;

function add(svg, tag, attrs) {
  const el = document.createElementNS(NS, tag);
  for (const key in attrs) el.setAttribute(key, attrs[key]);
  svg.appendChild(el);
}

function gridLines(svg, height, top, from, color) {
  let d = "";
  for (let i = from; i <= 33; i++) d += `M${(i * BEAT).toFixed(1)} ${top}V${height}`;
  add(svg, "path", { d, stroke: color, "stroke-width": 1, fill: "none" });
}

// Background bars alternate in brightness, one beat per grid line.
document.querySelectorAll("[data-grid]").forEach(svg => {
  svg.setAttribute("viewBox", "0 0 881 10");
  svg.setAttribute("preserveAspectRatio", "none");
  const scrub = svg.dataset.grid === "scrub";
  const shades = scrub ? ["#8d8988", "#999594"] : ["#807c7b", "#888483"];
  for (let i = 0; i < 9; i++) {
    add(svg, "rect", { x: i * 4 * BEAT, y: 0, width: 4 * BEAT + 1, height: 10, fill: shades[i % 2] });
  }
  gridLines(svg, 10, 0, 0, "#686463");
});

// Repeating one-bar drum pattern: offset in pixels, level, attack.
const pattern = [[0, .95, 1], [19, .7, 1], [45, .65, 1], [53, .95, 4], [79, .75, 1], [92, .95, 4]];
function hitsBetween(from, to, gain) {
  const hits = [];
  for (let k = -1; k < 9; k++) {
    for (const [x, a, attack] of pattern) {
      const at = 53.4 + k * 106.8 + x;
      if (at >= from - 2 && at < to) hits.push([at, a * gain, attack]);
    }
  }
  return hits;
}

function wave(svg, from, to, centre, hits, base, decay) {
  const up = [], down = [];
  for (let x = from; x <= to; x += 1) {
    let level = base;
    for (const [at, a, attack] of hits) {
      const t = x - at;
      if (t >= 0) level = Math.max(level, a * Math.exp(-t / decay));
      else if (t > -attack) level = Math.max(level, a * (1 + t / attack));
    }
    level *= 0.9 + 0.1 * Math.sin(x * 2.3);
    up.push(`${x.toFixed(1)} ${(centre - level).toFixed(1)}`);
    down.unshift(`${x.toFixed(1)} ${(centre + level).toFixed(1)}`);
  }
  add(svg, "path", { d: `M${up.join("L")}L${down.join("L")}Z`, fill: "#26221e" });
}

document.querySelectorAll("[data-wave]").forEach(svg => {
  const height = +svg.dataset.height;
  svg.setAttribute("viewBox", `0 0 881 ${height}`);
  svg.setAttribute("preserveAspectRatio", "none");
  const kind = svg.dataset.wave;
  const line = "rgba(40,34,32,.4)";
  if (kind === "main") {
    gridLines(svg, height, 21, 1, line);
    const fades = [[51, "#c47838"], [158, "#c47838"], [265, "#509040"], [291, "#0d9070"], [371, "#178a70"], [398, "#b87820"], [532, "#b87850"]];
    fades.forEach(([x, fill]) => add(svg, "path", { d: `M${x + 3} 21v87h-5z`, fill }));
    let edges = "";
    [2, 6, 10, 11, 14, 15, 20].forEach(b => { edges += `M${b * BEAT} 0V108`; });
    add(svg, "path", { d: edges, stroke: "#3a3430", "stroke-width": 1 });
    const quiet = (from, to) => {
      const hits = [];
      for (let x = from + 6; x < to; x += 53.4) hits.push([x, 2.8, 4], [x + 9, 2.2, 3], [x + 27, 1.7, 3], [x + 36, 1.6, 4]);
      return hits;
    };
    for (const y of [43, 85.5]) {
      wave(svg, 0, 54, y, [], .8, 5);
      wave(svg, 54, 160, y, hitsBetween(54, 158, 7), .9, 6);
      wave(svg, 160, 266, y, quiet(160, 266), 1.1, 8);
      wave(svg, 266, 293, y, [[270, 4.5, 3]], .9, 3);
      wave(svg, 293, 373, y, [[293, 6, 1], [312, 16, 1], [319, 21, 3], [346, 16, 1], [358, 21, 4], [366, 13, 1]], 1, 6);
      wave(svg, 373, 400, y, [[377, 4.5, 3]], .9, 3);
      wave(svg, 400, 534, y, hitsBetween(405, 534, 6.5), .9, 5);
      wave(svg, 534, 881, y, quiet(534, 881), 1.2, 8);
    }
  } else if (kind === "take1") {
    gridLines(svg, height, 20, 1, line);
    for (const y of [31, 52.5]) wave(svg, 0, 509, y, hitsBetween(0, 509, 11.5), .9, 7);
  } else {
    gridLines(svg, height, 20, 1, line);
    for (const y of [31, 52]) wave(svg, 0, 881, y, hitsBetween(0, 881, 4.5), .8, 6);
  }
});

function point(angle, r) {
  const a = angle * Math.PI / 180;
  return `${(19 + r * Math.sin(a)).toFixed(1)} ${(17 - r * Math.cos(a)).toFixed(1)}`;
}
function arc(from, to) {
  return `M${point(from, 15)}A15 15 0 ${to - from > 180 ? 1 : 0} 1 ${point(to, 15)}`;
}
document.querySelectorAll(".knob").forEach(svg => {
  const angle = +svg.dataset.angle;
  svg.setAttribute("viewBox", "0 0 38 32");
  if (angle > -147) add(svg, "path", { d: arc(-147, angle), stroke: "#74cdea" });
  add(svg, "path", { d: arc(Math.max(angle + 10, -147), 147), stroke: "#26221e" });
  add(svg, "path", { d: `M19 17L${point(angle, 15)}`, stroke: "#26221e" });
});
```
